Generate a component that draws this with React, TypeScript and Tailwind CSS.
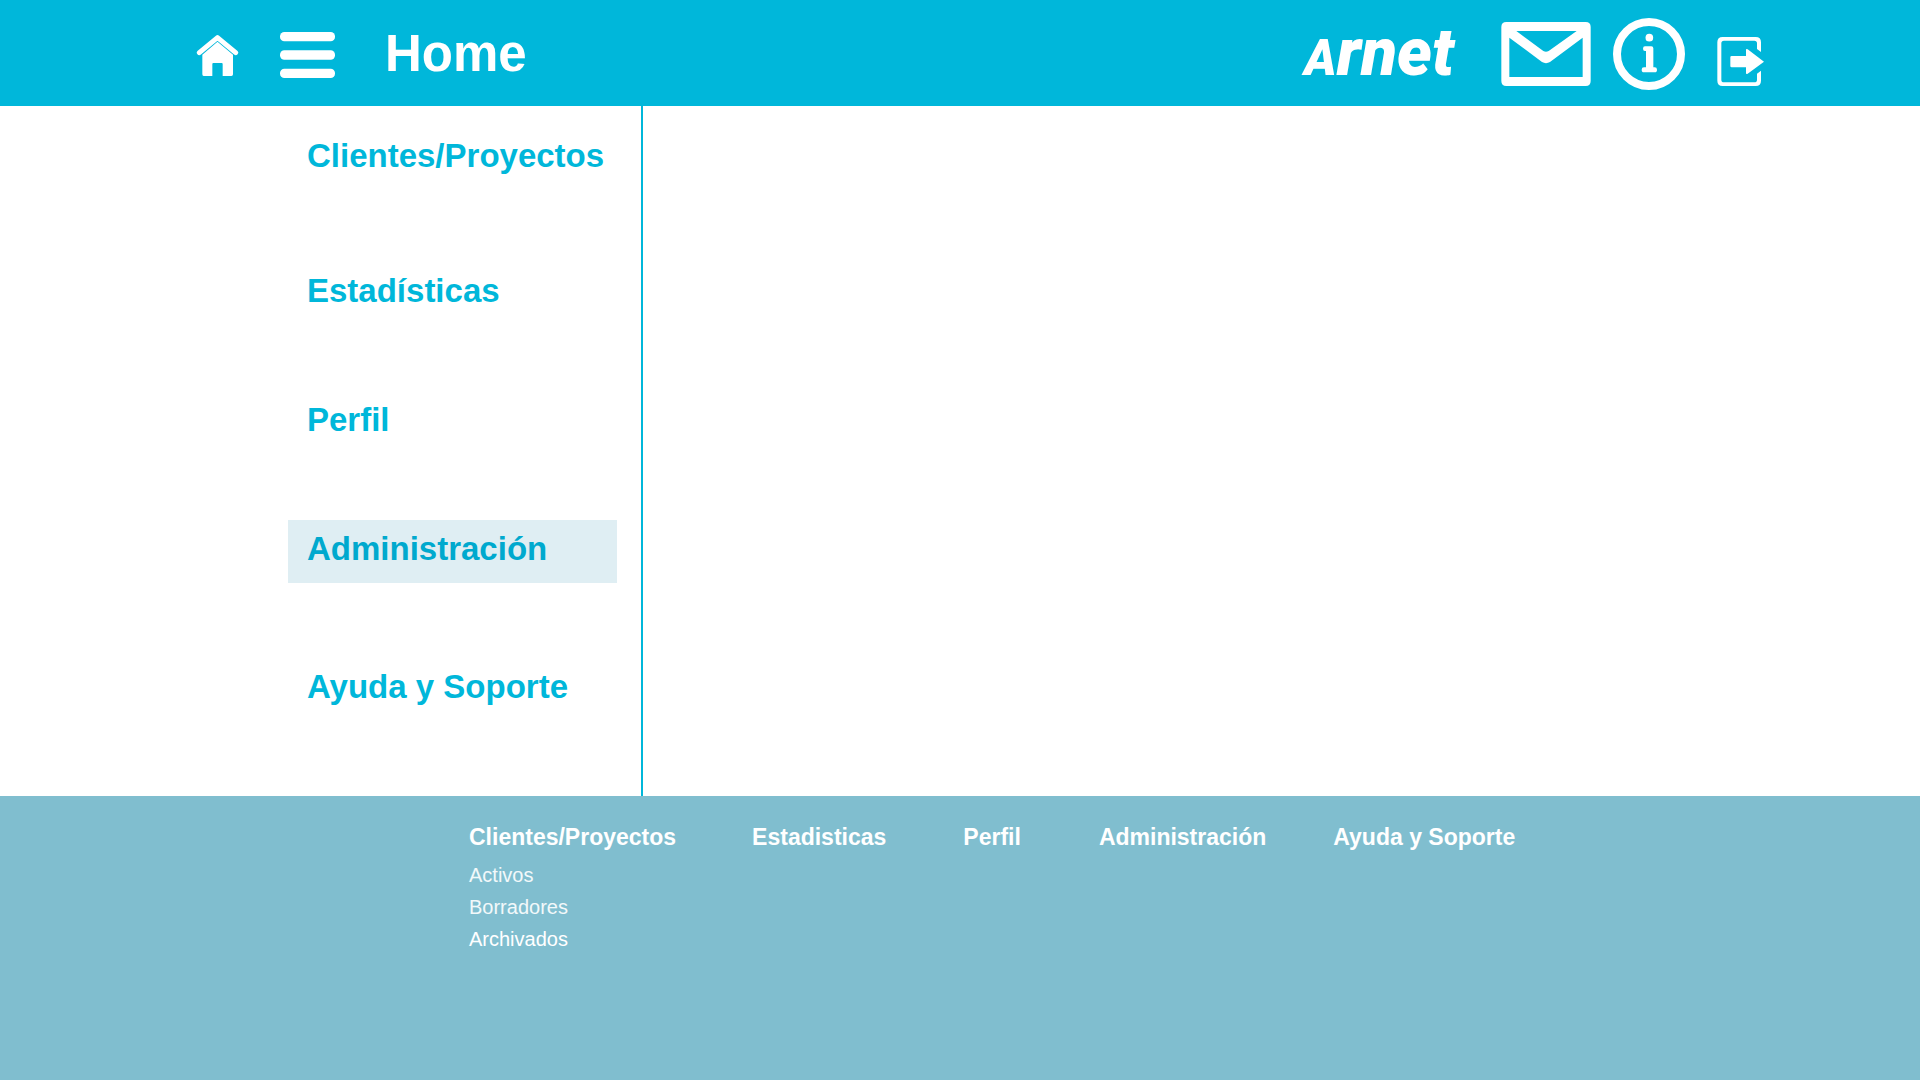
const menu = [
  { label: "Clientes/Proyectos", active: false, space: "" },
  { label: "Estadísticas", active: false, space: "mt-[72px]" },
  { label: "Perfil", active: false, space: "mt-[66px]" },
  { label: "Administración", active: true, space: "mt-[66px]" },
  { label: "Ayuda y Soporte", active: false, space: "mt-[75px]" },
];

function HomeIcon() {
  return (
    <svg className="block h-[44px] w-[43px]" viewBox="48 96 129 132" fill="#fff" aria-hidden="true">
      <path d="M58 158 L112.500 113 L167 158" fill="none" stroke="#fff" strokeWidth="15" strokeLinecap="round" strokeLinejoin="round" />
      <path d="M67 164 L112.500 125 L159 164 V223 Q159 228 154 228 H128 V192 Q128 189 125 189 H100 Q97 189 97 192 V228 H71 Q67 228 67 223 Z" />
    </svg>
  );
}

function MenuIcon() {
  return (
    <svg className="block h-[47px] w-[55px]" viewBox="300 93 165 141" fill="#fff" aria-hidden="true">
      <rect x="300" y="96" width="165" height="28" rx="13" />
      <rect x="300" y="151" width="165" height="28" rx="13" />
      <rect x="300" y="206" width="165" height="28" rx="13" />
    </svg>
  );
}

function MailIcon() {
  return (
    <svg className="block h-[64px] w-[90px]" viewBox="33 51 270 192" fill="#fff" aria-hidden="true">
      <path
        fillRule="evenodd"
        d="M49 51 H287 Q302 51 302 66 V228 Q302 243 287 243 H49 Q34 243 34 228 V66 Q34 51 49 51 Z
           M79 78 L160 138 Q168 143 176 138 L260 78 Z
           M58 98 V216 H278 V98 L180 171 Q168 178 156 171 Z"
      />
    </svg>
  );
}

function InfoIcon() {
  return (
    <svg className="block size-[72px]" viewBox="369 39 216 216" fill="#fff" aria-hidden="true">
      <circle cx="477" cy="147" r="96" fill="none" stroke="#fff" strokeWidth="24" />
      <circle cx="478" cy="98" r="11.500" />
      <path d="M465 124 H484 Q490 124 490 130 V187 H494 Q501 187 501 194 Q501 202 494 202 H462 Q455 202 455 194 Q455 187 462 187 H468 V138 H465 Q459 138 459 131 Q459 124 465 124 Z" />
    </svg>
  );
}

function ExitIcon() {
  return (
    <svg className="block h-[64px] w-[48px]" viewBox="681 51 144 192" fill="#fff" aria-hidden="true">
      <path d="M698 96 H797 Q813 96 813 112 V141 L801 132 V115 Q801 107 793 107 H702 Q694 107 694 115 V224 Q694 232 702 232 H793 Q801 232 801 224 V206 L813 197 V227 Q813 243 797 243 H698 Q682 243 682 227 V112 Q682 96 698 96 Z" />
      <path d="M725 153 H768 V135 Q768 130 773 133 L822 170 L773 206 Q768 209 768 204 V187 H725 Q721 187 721 183 V157 Q721 153 725 153 Z" />
    </svg>
  );
}

export default function App() {
  return (
    <div className="flex min-h-screen flex-col bg-white font-['Liberation_Sans',Arial,sans-serif]">
      <header className="flex h-[106px] items-center bg-[#00b7da] pt-0.5 pr-[155px] pl-[196px] text-white">
        <a href="#home" aria-label="Home">
          <HomeIcon />
        </a>
        <button type="button" aria-label="Menú" className="ml-[41px]">
          <MenuIcon />
        </button>
        <h1 className="ml-[50px] text-[51px] leading-[52px] font-bold">Home</h1>
        <a
          href="#arnet"
          className="mr-[47px] ml-auto flex items-baseline pt-1 font-['Roboto',sans-serif] text-[66px] leading-[66px] font-black italic"
        >
          <span className="text-[49px]">A</span>rnet
        </a>
        <a href="#mensajes" aria-label="Mensajes">
          <MailIcon />
        </a>
        <a href="#info" aria-label="Información" className="ml-[22px]">
          <InfoIcon />
        </a>
        <button type="button" aria-label="Salir" className="ml-8">
          <ExitIcon />
        </button>
      </header>

      <div className="flex">
        <nav
          aria-label="Principal"
          className="w-[643px] shrink-0 border-r-2 border-[#00b7da] pt-[21px] pr-6 pb-[75px] pl-[288px]"
        >
          <ul>
            {menu.map((item) => (
              <li key={item.label} className={item.space}>
                <a
                  href="#seccion"
                  aria-current={item.active ? "page" : undefined}
                  className={
                    item.active
                      ? "block bg-[#dfeef3] pb-1.5 pl-[19px] text-[33px] leading-[57px] font-bold text-[#00a9ce]"
                      : "block pb-1.5 pl-[19px] text-[33px] leading-[57px] font-bold text-[#00b7da]"
                  }
                >
                  {item.label}
                </a>
              </li>
            ))}
          </ul>
        </nav>
        <main className="flex-1" />
      </div>

      <footer className="flex flex-1 items-start bg-[#80becf] pt-6 pl-[469px] text-[23px] leading-[34px] font-bold text-white">
        <div>
          <a href="#clientes">Clientes/Proyectos</a>
          <ul className="mt-[5px] text-[20px] leading-8 font-normal">
            <li>
              <a href="#activos" className="text-white/90">Activos</a>
            </li>
            <li>
              <a href="#borradores" className="text-white/90">Borradores</a>
            </li>
            <li>
              <a href="#archivados">Archivados</a>
            </li>
          </ul>
        </div>
        <a href="#estadisticas" className="ml-[76px]">Estadisticas</a>
        <a href="#perfil" className="ml-[77px]">Perfil</a>
        <a href="#administracion" className="ml-[78px]">Administración</a>
        <a href="#ayuda" className="ml-[67px]">Ayuda y Soporte</a>
      </footer>
    </div>
  );
}
